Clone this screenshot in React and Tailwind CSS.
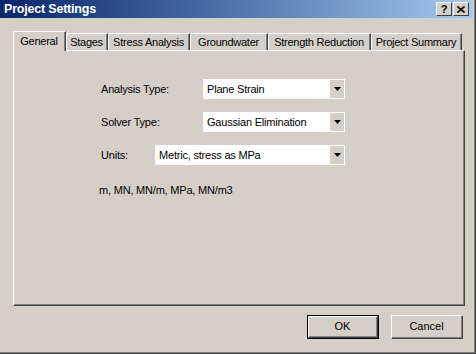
import React from "react";

const font = { fontFamily: '"Liberation Sans", Arial, sans-serif' };

function Arrow() {
  return (
    <div className="w-[14px] h-full bg-[#d4d0c8] flex items-center justify-center">
      <svg width="7" height="4" viewBox="0 0 7 4">
        <path d="M0 0H7L3.5 4Z" fill="#000" />
      </svg>
    </div>
  );
}

function Combo({ width, text }) {
  return (
    <div className={`${width} h-[20px] bg-white flex items-stretch py-[1px] pr-[1px]`}>
      <div className="flex-1 pl-[4px] flex items-center text-[11px] text-black leading-none tracking-[-0.2px]">{text}</div>
      <Arrow />
    </div>
  );
}

function Tab({ label, w, selected }) {
  if (selected) {
    return (
      <div className={`${w} h-[20px] -mb-px relative z-10 bg-[#d4d0c8] border-t border-l border-white border-r border-r-[#404040] rounded-tl-[2px] flex`}>
        <div className="flex-1 border-r border-r-[#808080] flex items-start justify-center pt-[2px] text-[11px] text-black leading-[14px] tracking-[-0.25px]">
          {label}
        </div>
      </div>
    );
  }
  return (
    <div className={`${w} h-[17px] bg-[#d4d0c8] border-t border-l border-white border-r border-r-[#404040] rounded-tl-[2px] flex`}>
      <div className="flex-1 border-r border-r-[#808080] flex items-start justify-center pt-[1px] text-[11px] text-black leading-[14px] tracking-[-0.25px]">
        {label}
      </div>
    </div>
  );
}

export default function App() {
  return (
    <div className="w-[476px] h-[354px] bg-[#d4d0c8] border-r border-b border-[#404040]" style={font}>
      <div className="w-full h-full border-r border-b border-[#808080] flex flex-col">
        {/* Title bar */}
        <div className="h-[18px] mr-[1px] bg-gradient-to-r from-[#0a246a] to-[#a6caf0] flex items-center pl-[4px] pr-[4px]">
          <div className="text-white font-bold text-[12.5px] leading-none flex-1 tracking-[-0.2px]">Project Settings</div>
          <div className="flex items-center">
            <div className="w-[16px] h-[14px] bg-[#d4d0c8] border-t border-l border-white border-r border-b border-r-[#404040] border-b-[#404040] flex items-center justify-center text-[11px] font-bold text-black leading-none">
              ?
            </div>
            <div className="w-[16px] h-[14px] ml-[1px] bg-[#d4d0c8] border-t border-l border-white border-r border-b border-r-[#404040] border-b-[#404040] flex items-center justify-center">
              <svg width="8" height="7" viewBox="0 0 8 7">
                <path d="M0.5 0.5L7.5 6.5M7.5 0.5L0.5 6.5" stroke="#000" strokeWidth="1.6" />
              </svg>
            </div>
          </div>
        </div>

        {/* Body */}
        <div className="pl-[13px] pt-[13px] flex flex-col">
          <div className="h-[19px] flex items-end">
            <Tab label="General" w="w-[53px]" selected />
            <Tab label="Stages" w="w-[42px]" />
            <Tab label="Stress Analysis" w="w-[82px]" />
            <Tab label="Groundwater" w="w-[78px]" />
            <Tab label="Strength Reduction" w="w-[103px]" />
            <Tab label="Project Summary" w="w-[91px]" />
          </div>
          <div className="w-[452px] h-[256px] border-t border-l border-white border-r border-b border-r-[#404040] border-b-[#404040]">
            <div className="w-full h-full border-r border-b border-r-[#808080] border-b-[#808080] pl-[87px] pt-[28px] flex flex-col text-[11px] text-black tracking-[-0.2px]">
              <div className="flex items-center h-[20px]">
                <div className="w-[102px] leading-none">Analysis Type:</div>
                <Combo width="w-[142px]" text="Plane Strain" />
              </div>
              <div className="flex items-center h-[20px] mt-[13px]">
                <div className="w-[102px] leading-none">Solver Type:</div>
                <Combo width="w-[142px]" text="Gaussian Elimination" />
              </div>
              <div className="flex items-center h-[20px] mt-[13px]">
                <div className="w-[54px] leading-none">Units:</div>
                <Combo width="w-[190px]" text="Metric, stress as MPa" />
              </div>
              <div className="mt-[18px] leading-[14px] -ml-[2px]">m, MN, MN/m, MPa, MN/m3</div>
            </div>
          </div>
          <div className="flex justify-end gap-[12px] mt-[9px] pr-[11px]">
            <div className="w-[72px] h-[24px] border border-black">
              <div className="w-full h-full border-t border-l border-white border-r border-b border-r-[#404040] border-b-[#404040]">
                <div className="w-full h-full border-r border-b border-r-[#808080] border-b-[#808080] flex items-center justify-center text-[11px] text-black leading-none">
                  OK
                </div>
              </div>
            </div>
            <div className="w-[72px] h-[24px] border-t border-l border-white border-r border-b border-r-[#404040] border-b-[#404040]">
              <div className="w-full h-full border-r border-b border-r-[#808080] border-b-[#808080] flex items-center justify-center text-[11px] text-black leading-none">
                Cancel
              </div>
            </div>
          </div>
        </div>
      </div>
    </div>
  );
}
